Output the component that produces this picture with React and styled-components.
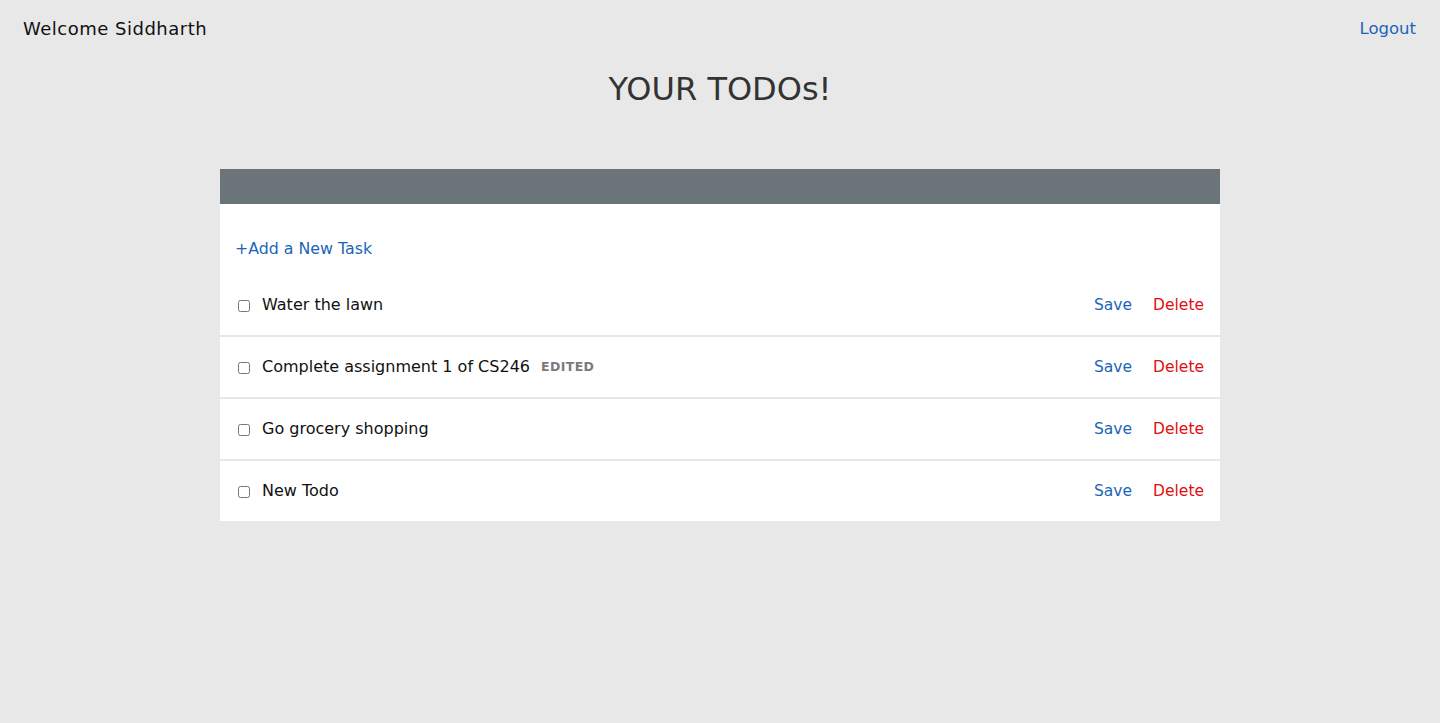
import React from "react";
import styled, { createGlobalStyle } from "styled-components";

const Global = createGlobalStyle`
  html, body { margin: 0; padding: 0; background: #e8e8e8; }
  body { font-family: "DejaVu Sans", "Open Sans", sans-serif; color: #111; }
  * { box-sizing: border-box; }
`;

const Page = styled.div`
  min-height: 723px;
  background: #e8e8e8;
`;

const TopBar = styled.header`
  display: flex;
  justify-content: space-between;
  align-items: center;
  height: 56px;
  padding: 0 24px 0 23px;
`;

const Welcome = styled.div`
  font-size: 18px;
  color: #111;
  letter-spacing: 0.5px;
`;

const LinkButton = styled.a`
  font-size: ${(p) => p.$size || "15.5px"};
  color: ${(p) => p.$color || "#1a65b8"};
  text-decoration: none;
  cursor: pointer;
`;

const Title = styled.h1`
  margin: 13px 0 0;
  text-align: center;
  font-size: 32px;
  font-weight: 400;
  color: #333;
  line-height: 40px;
`;

const Card = styled.section`
  width: 1000px;
  margin: 60px auto 0;
  background: #fff;
`;

const CardHead = styled.div`
  height: 35px;
  background: #6a7479;
`;

const AddRow = styled.div`
  height: 71px;
  display: flex;
  align-items: flex-end;
  padding: 0 15px 17px;
`;

const Row = styled.div`
  display: flex;
  align-items: center;
  padding: 0 16px 1px 18px;
  border-bottom: ${(p) => (p.$last ? "none" : "2px solid #e8e8e8")};
  height: ${(p) => (p.$last ? "60px" : "62px")};
`;

const Check = styled.input.attrs({ type: "checkbox" })`
  width: 12px;
  height: 12px;
  margin: 2px 12px 0 0;
  accent-color: #888;
`;

const TaskText = styled.span`
  font-size: 16px;
  color: #111;
`;

const Tag = styled.span`
  margin-left: 11px;
  font-size: 12.5px;
  font-weight: 700;
  color: #7a7a7a;
  letter-spacing: 0.4px;
`;

const Actions = styled.div`
  margin-left: auto;
  display: flex;
  gap: 21px;
`;

const todos = [
  { text: "Water the lawn" },
  { text: "Complete assignment 1 of CS246", edited: true },
  { text: "Go grocery shopping" },
  { text: "New Todo" },
];

export default function App() {
  return (
    <Page>
      <Global />
      <TopBar>
        <Welcome>Welcome Siddharth</Welcome>
        <LinkButton $size="16.5px">Logout</LinkButton>
      </TopBar>
      <Title>YOUR TODOs!</Title>
      <Card>
        <CardHead />
        <AddRow>
          <LinkButton $size="15.8px">+Add a New Task</LinkButton>
        </AddRow>
        {todos.map((t, i) => (
          <Row key={i} $last={i === todos.length - 1}>
            <Check />
            <TaskText>{t.text}</TaskText>
            {t.edited && <Tag>EDITED</Tag>}
            <Actions>
              <LinkButton>Save</LinkButton>
              <LinkButton $color="#e01010">Delete</LinkButton>
            </Actions>
          </Row>
        ))}
      </Card>
    </Page>
  );
}
